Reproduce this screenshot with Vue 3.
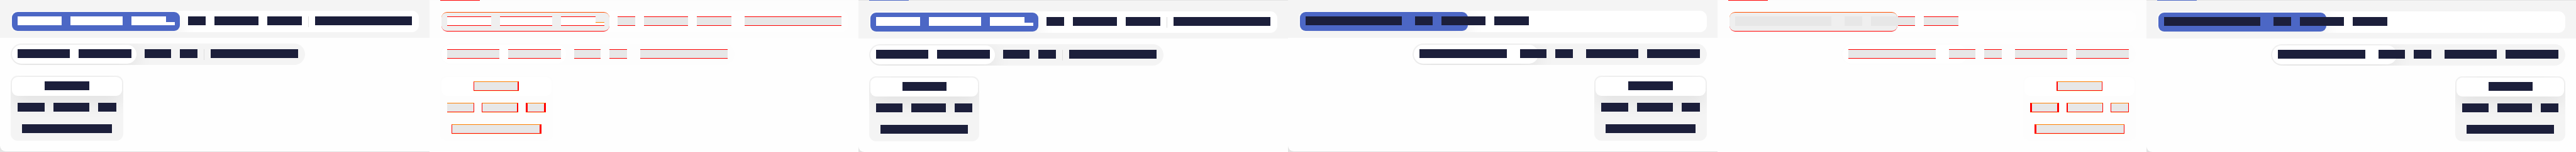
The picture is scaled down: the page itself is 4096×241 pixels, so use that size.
<script setup>
const run = (w, extra = {}) => ({ w, ...extra })

function plain(vertical) {
  return {
    main: [
      [run(70, { light: true }), run(83, { light: true }), run(55, { light: true, tail: true })],
      [run(28), run(70), run(55)],
      [run(154)]
    ],
    pill: [[run(83), run(84)], [run(42), run(28)], [run(139)]],
    stack: vertical
  }
}

function mirrored(vertical) {
  return {
    main: [[run(153)], [run(28), run(70), run(55)]],
    pill: [[run(139)], [run(42), run(28)], [run(83), run(84)]],
    stack: vertical,
    rtl: true
  }
}

const wide = [[run(71)], [run(43), run(57), run(29)], [run(143)]]
const narrow = [[run(70)], [run(42), run(55), run(28)], [run(139)]]

const panels = [
  { kind: 'before', ...plain(wide) },
  {
    kind: 'diff',
    ...plain([
      [run(72, { l: 1, r: 2 })],
      [run(43, { r: 1 }), run(58, { l: 1, r: 2 }), run(32, { l: 3, r: 3 })],
      [run(143, { l: 1, r: 3 })]
    ])
  },
  { kind: 'after', ...plain(narrow) },
  { kind: 'before', ...mirrored(wide) },
  {
    kind: 'diff',
    ...mirrored([
      [run(73, { l: 2, r: 1 })],
      [run(46, { l: 3, r: 3 }), run(58, { l: 2, r: 1 }), run(29, { l: 1, r: 1 })],
      [run(143, { l: 3, r: 1 })]
    ]),
    main: [
      [run(153, { flat: true })],
      [run(28, { flat: true }), run(43, { flat: true }), run(27, { join: true }), run(55)]
    ]
  },
  { kind: 'after', ...mirrored(narrow) }
]

const bars = ['main', 'pill', 'stack']
const thumb = { main: 267, pill: 198 }

const runStyle = (r) => ({
  width: r.w + 'px',
  borderLeftWidth: (r.l || 0) + 'px',
  borderRightWidth: (r.r || 0) + 'px'
})
</script>

<template>
  <main class="sheet">
    <section
      v-for="(p, i) in panels"
      :key="i"
      class="panel"
      :class="[p.kind, { rtl: p.rtl }]"
    >
      <div v-if="p.kind !== 'before'" class="edge"><i class="edge-mark"></i></div>
      <div v-for="b in bars" :key="b" class="zone" :class="'zone-' + b">
        <div class="segment" :class="b">
          <i class="thumb" :style="thumb[b] ? { width: thumb[b] + 'px' } : null"></i>
          <template v-for="(tab, t) in p[b]" :key="t">
            <i v-if="t > 0 && b !== 'stack'" class="sep" :class="{ line: t === 2 && !p.rtl }"></i>
            <button type="button" class="tab" :aria-label="'Segment ' + (t + 1)">
              <span
                v-for="(r, k) in tab"
                :key="k"
                class="run"
                :class="{ light: r.light, tail: r.tail, flat: r.flat, join: r.join }"
                :style="runStyle(r)"
              ></span>
            </button>
          </template>
        </div>
      </div>
      <div class="foot"></div>
    </section>
  </main>
</template>

<style>
body {
  margin: 0;
}
</style>

<style scoped>
.sheet {
  display: grid;
  grid-template-columns: repeat(6, 1fr);
  height: 100vh;
  overflow: hidden;
  background: #fefefe;
}

.panel {
  --ink: #1c1f3b;
  --bar: #f4f4f4;
  display: flex;
  flex-direction: column;
  min-width: 0;
  overflow: hidden;
  background: #fefefe;
}

.edge {
  flex: none;
  height: 1px;
  padding-left: 17px;
  background: #e4e4e4;
}

.edge-mark {
  display: block;
  width: 63px;
  height: 1px;
  background: #4c67c5;
}

.zone {
  display: flex;
  flex: none;
  padding: 0 17px;
}

.zone-main {
  padding: 17px 17px 9px;
  background: var(--bar);
}

.zone-pill {
  padding-top: 9px;
}

.zone-stack {
  padding-top: 17px;
}

.rtl .zone {
  justify-content: flex-end;
}

.segment {
  position: relative;
  display: flex;
  box-sizing: border-box;
  padding: 0 2px;
  overflow: hidden;
  border-radius: 11px;
  background: var(--bar);
}

.main {
  flex: 1;
  background: #fff;
}

.pill {
  border-radius: 17px;
}

.stack {
  flex-direction: column;
  padding-bottom: 1px;
}

.thumb {
  position: absolute;
  top: 2px;
  left: 2px;
  box-sizing: border-box;
  height: 30px;
  border-radius: 9px;
  background: #fff;
  box-shadow: 0 8px 30px rgba(0, 0, 0, 0.09);
}

.main .thumb {
  background: #4c67c5;
}

.pill .thumb {
  border-radius: 15px;
}

.stack .thumb {
  right: 2px;
}

.tab {
  position: relative;
  display: flex;
  flex: none;
  gap: 14px;
  justify-content: center;
  box-sizing: border-box;
  height: 34px;
  margin: 0;
  padding: 9px 9px 0;
  border: 0;
  background: none;
}

.sep {
  position: relative;
  flex: none;
  width: 3px;
  height: 17px;
  margin-top: 9px;
}

.sep.line {
  background: linear-gradient(#dedede, #dedede) center / 1px 100% no-repeat;
}

.run {
  position: relative;
  flex: none;
  box-sizing: border-box;
  height: 14px;
  border: 0 solid #f00;
  background: var(--ink);
}

.run.light {
  background: #fff;
}

.run.tail {
  margin-right: 14px;
}

.run.tail::after {
  position: absolute;
  bottom: 0;
  left: 100%;
  width: 14px;
  height: 5px;
  background: #fff;
  content: '';
}

.run.join {
  margin-left: -14px;
}

.foot {
  flex: 1;
  min-height: 9px;
  background: linear-gradient(#e4e4e4, #e4e4e4) left bottom / 9px 9px no-repeat;
  position: relative;
}

.foot::after {
  position: absolute;
  inset: 0;
  border-bottom-left-radius: 9px;
  background: #fefefe;
  content: '';
}

.before .foot {
  background: #e4e4e4;
}

.before .foot::after {
  bottom: 1px;
}

.diff {
  --ink: #e7e7e7;
  --bar: #fdfdfd;
}

.diff .edge {
  background: #fcfcfc;
}

.diff .edge-mark {
  background: #f00;
}

.diff .zone-main {
  margin-top: -1px;
}

.diff .edge {
  position: relative;
}

.diff .main {
  background: #fefefe;
}

.diff .thumb {
  box-shadow: none;
}

.diff .main .thumb {
  height: 31px;
  border: 0 solid #f00;
  border-top: 1px solid #ff5000;
  border-bottom-width: 1px;
  background: #efefef;
}

.diff .sep.line {
  background: none;
}

.diff .run {
  height: 15px;
  border-top-width: 1px;
  border-bottom-width: 1px;
}

.diff .run.flat {
  border: 0;
}

.diff .run.tail::after {
  bottom: -1px;
  box-sizing: border-box;
  height: 6px;
  border-top: 1px solid #ff8000;
  border-bottom: 1px solid #f00;
}

.diff .stack .tab {
  gap: 12px;
}

.diff .stack .run {
  border-top-color: #ff8000;
  box-shadow: 0 1px #ffffc0;
}

.diff .foot {
  background: none;
}
</style>
